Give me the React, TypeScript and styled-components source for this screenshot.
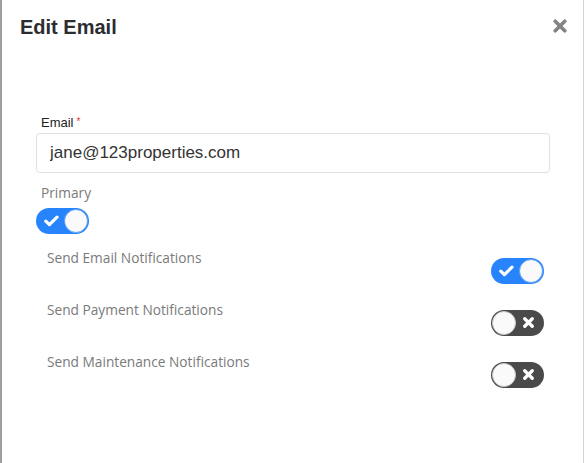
import React, { useState } from "react";
import styled, { createGlobalStyle } from "styled-components";

const GlobalStyle = createGlobalStyle`
  html, body {
    margin: 0;
    padding: 0;
    background: #ffffff;
  }
  * {
    box-sizing: border-box;
  }
`;

const Modal = styled.div`
  width: 584px;
  height: 463px;
  background: #ffffff;
  border-left: 2px solid #9e9e9e;
  border-right: 1px solid #d4d4d4;
  display: flex;
  flex-direction: column;
  overflow: hidden;
`;

const Header = styled.div`
  display: flex;
  justify-content: space-between;
  align-items: flex-start;
  padding: 15px 16px 0 18px;
`;

const Title = styled.h2`
  margin: 0;
  font-family: "Liberation Sans", Arial, sans-serif;
  font-size: 20px;
  line-height: 24px;
  font-weight: 700;
  color: #2b2d30;
`;

const CloseButton = styled.button`
  border: none;
  background: none;
  padding: 0;
  margin-top: 4px;
  width: 14px;
  height: 14px;
  cursor: pointer;
  display: flex;
`;

const Body = styled.div`
  padding: 75px 33px 0 34px;
  display: flex;
  flex-direction: column;
`;

const FieldLabel = styled.label`
  font-family: "Liberation Sans", Arial, sans-serif;
  font-size: 13px;
  line-height: 16px;
  color: #222;
  padding-left: 5px;
`;

const Required = styled.sup`
  color: #e03b3b;
  font-size: 10px;
  margin-left: 3px;
  vertical-align: 2px;
`;

const Input = styled.input`
  margin-top: 2px;
  width: 100%;
  height: 40px;
  border: 1px solid #dde1e6;
  border-radius: 4px;
  padding: 0 13px;
  font-family: "Liberation Sans", Arial, sans-serif;
  font-size: 17px;
  color: #333;
  outline: none;
`;

const SwitchLabel = styled.div<{ $indent?: number }>`
  font-family: "Open Sans", sans-serif;
  font-size: 13.7px;
  line-height: 20px;
  color: #7a7a7a;
  padding-left: ${(p) => p.$indent ?? 5}px;
`;

const PrimaryBlock = styled.div`
  margin-top: 10px;
  display: flex;
  flex-direction: column;
  align-items: flex-start;
  gap: 5px;
`;

const NotifyList = styled.div`
  margin-top: 14px;
  display: flex;
  flex-direction: column;
  gap: 16px;
`;

const NotifyRow = styled.div`
  display: flex;
  justify-content: space-between;
  align-items: flex-start;
  padding-right: 6px;
`;

const Track = styled.button<{ $on: boolean; $offset?: number }>`
  position: relative;
  width: 53px;
  height: 26px;
  border-radius: 13px;
  border: none;
  padding: 0;
  margin-top: ${(p) => p.$offset ?? 0}px;
  background: ${(p) => (p.$on ? "#2784fc" : "#4a4a4a")};
  cursor: pointer;
  flex-shrink: 0;
`;

const Knob = styled.span<{ $on: boolean }>`
  position: absolute;
  top: 1px;
  left: ${(p) => (p.$on ? "28px" : "1px")};
  width: 24px;
  height: 24px;
  border-radius: 50%;
  background: #fafafa;
  border: 1px solid ${(p) => (p.$on ? "#5a9ff8" : "#c8c8c8")};
`;

const Mark = styled.span<{ $on: boolean }>`
  position: absolute;
  top: 7px;
  left: ${(p) => (p.$on ? "8px" : "32px")};
  display: flex;
`;

const CheckIcon = () => (
  <svg width="15" height="12" viewBox="0 0 15 12">
    <path d="M1.8 6.2 L5.4 9.6 L13 2.2" stroke="#fff" strokeWidth="3.2" fill="none" strokeLinecap="round" strokeLinejoin="round" />
  </svg>
);

const CrossIcon = ({ size = 10, color = "#fff", width = 3 }: { size?: number; color?: string; width?: number }) => (
  <svg width={size} height={size} viewBox="0 0 10 10">
    <path d="M1.6 1.6 L8.4 8.4 M8.4 1.6 L1.6 8.4" stroke={color} strokeWidth={width} strokeLinecap="round" fill="none" />
  </svg>
);

function Toggle({ on, onChange, offset }: { on: boolean; onChange: () => void; offset?: number }) {
  return (
    <Track $on={on} $offset={offset} onClick={onChange} aria-pressed={on}>
      <Mark $on={on}>{on ? <CheckIcon /> : <CrossIcon size={11} />}</Mark>
      <Knob $on={on} />
    </Track>
  );
}

export default function App() {
  const [primary, setPrimary] = useState(true);
  const [notify, setNotify] = useState({ email: true, payment: false, maintenance: false });

  const rows: { key: keyof typeof notify; label: string }[] = [
    { key: "email", label: "Send Email Notifications" },
    { key: "payment", label: "Send Payment Notifications" },
    { key: "maintenance", label: "Send Maintenance Notifications" },
  ];

  return (
    <>
      <GlobalStyle />
      <Modal>
        <Header>
          <Title>Edit Email</Title>
          <CloseButton aria-label="Close">
            <CrossIcon size={14} color="#838383" width={2.6} />
          </CloseButton>
        </Header>
        <Body>
          <FieldLabel>
            Email<Required>*</Required>
          </FieldLabel>
          <Input defaultValue="jane@123properties.com" />
          <PrimaryBlock>
            <SwitchLabel>Primary</SwitchLabel>
            <Toggle on={primary} onChange={() => setPrimary(!primary)} />
          </PrimaryBlock>
          <NotifyList>
            {rows.map((r) => (
              <NotifyRow key={r.key}>
                <SwitchLabel $indent={11}>{r.label}</SwitchLabel>
                <Toggle
                  on={notify[r.key]}
                  offset={10}
                  onChange={() => setNotify({ ...notify, [r.key]: !notify[r.key] })}
                />
              </NotifyRow>
            ))}
          </NotifyList>
        </Body>
      </Modal>
    </>
  );
}
